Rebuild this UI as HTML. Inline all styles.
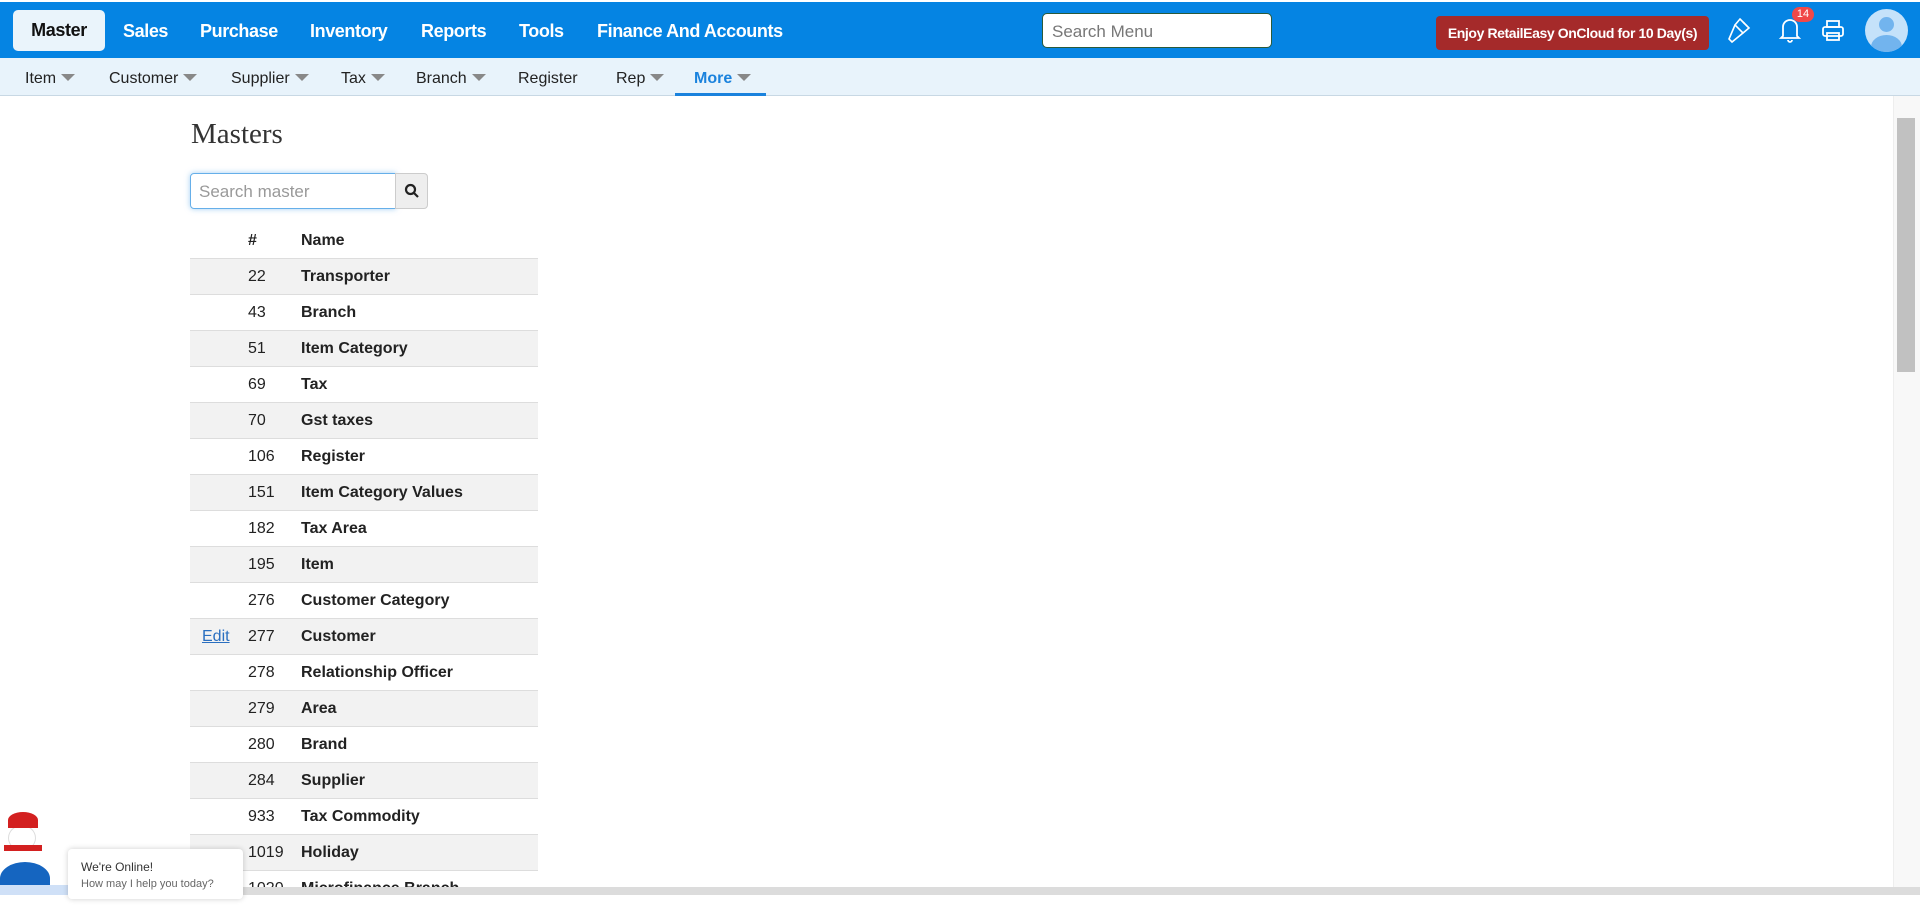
<!DOCTYPE html>
<html><head><meta charset="utf-8"><style>
*{box-sizing:border-box;margin:0;padding:0}
body{width:1920px;height:895px;overflow:hidden;background:#fff;font-family:"Liberation Sans",sans-serif;position:relative;color:#222}
.top{position:absolute;left:0;top:2px;width:1920px;height:56px;background:#0584e3}
.top .m{position:absolute;top:19px;font-size:18px;font-weight:bold;color:#fff;letter-spacing:-0.4px}
.master{position:absolute;left:13px;top:8px;width:92px;height:41px;background:#eaf4fb;border-radius:5px;color:#111;font-size:18px;font-weight:bold;text-align:center;line-height:41px;letter-spacing:-0.4px}
.sm{position:absolute;left:1042px;top:11px;width:230px;height:35px;background:#fff;border:1px solid #2a5a3a;border-radius:5px;font-size:17px;color:#777;padding:8px 9px}
.badge{position:absolute;left:1436px;top:14px;width:273px;height:34px;background:#a52a2a;border-radius:4px;color:#fff;font-weight:bold;font-size:14px;line-height:34px;text-align:center;letter-spacing:-0.4px}
.sub{position:absolute;left:0;top:58px;width:1920px;height:38px;background:#e8f3fb;border-bottom:1px solid #c8d8e4}
.sub span{position:absolute;top:12px;font-size:16px;color:#222}
.sub i{display:inline-block;width:0;height:0;border-left:7px solid transparent;border-right:7px solid transparent;border-top:7px solid #888;margin-left:5px;vertical-align:2px}
h1{position:absolute;left:191px;top:118px;font-family:"Liberation Serif",serif;font-weight:normal;font-size:29px;color:#333}
.inp{position:absolute;left:190px;top:173px;width:206px;height:36px;border:1px solid #66afe9;border-radius:4px 0 0 4px;box-shadow:0 0 6px rgba(102,175,233,.6);font-size:17px;color:#999;padding:8px 8px;font-family:"Liberation Sans",sans-serif}
.btn{position:absolute;left:395px;top:173px;width:33px;height:36px;background:#eee;border:1px solid #ccc;border-radius:0 4px 4px 0}
table{position:absolute;left:190px;top:222px;width:348px;border-collapse:collapse;font-size:16px}
td,th{height:36px;padding:2px 0 0;text-align:left;border-top:1px solid #ddd}
th{border-top:none;height:36px;font-weight:bold}
tr:nth-child(even) td{background:#f2f2f2}
td.n{font-weight:bold}
.c1{width:58px;padding-left:12px}.c2{width:53px}
a{color:#2a6fc0;text-decoration:underline}
.sb{position:absolute;left:1893px;top:96px;width:27px;height:791px;background:#f8f8f8;border-left:1px solid #eee}
.th{position:absolute;left:3px;top:22px;width:18px;height:254px;background:#c1c1c1}
.hb{position:absolute;left:0;top:887px;width:1920px;height:8px;background:#dcdcdc}
.chat{position:absolute;left:68px;top:849px;width:175px;height:50px;background:#fff;box-shadow:0 0 6px rgba(0,0,0,.2);border-radius:4px;font-size:12px;padding:11px 13px;color:#333}
</style></head><body>
<div class="top">
<div class="master">Master</div>
<span class="m" style="left:123px">Sales</span>
<span class="m" style="left:200px">Purchase</span>
<span class="m" style="left:310px">Inventory</span>
<span class="m" style="left:421px">Reports</span>
<span class="m" style="left:519px">Tools</span>
<span class="m" style="left:597px">Finance And Accounts</span>
<div class="sm">Search Menu</div>
<div class="badge">Enjoy RetailEasy OnCloud for 10 Day(s)</div>
<svg style="position:absolute;left:1726px;top:13px" width="28" height="30" viewBox="0 0 28 30" fill="none" stroke="#fff" stroke-width="1.6"><path d="M14 4l9 9-6 5-8-8z"/><path d="M9 10l-6 14 3 3 11-9"/><path d="M17 7l2 2M20 10l1 1"/></svg>
<svg style="position:absolute;left:1778px;top:12px" width="24" height="30" viewBox="0 0 24 30" fill="none" stroke="#fff" stroke-width="1.8"><path d="M5 22V13a7 7 0 0 1 14 0v9l2 2H3z"/><path d="M10 26a2 2 0 0 0 4 0"/></svg>
<div style="position:absolute;left:1792px;top:5px;width:22px;height:15px;background:#f04848;border-radius:8px;color:#fff;font-size:11px;text-align:center;line-height:15px">14</div>
<svg style="position:absolute;left:1821px;top:17px" width="24" height="24" viewBox="0 0 24 24" fill="none" stroke="#fff" stroke-width="1.8"><rect x="6" y="2" width="12" height="6"/><rect x="2" y="8" width="20" height="9" rx="2"/><rect x="6" y="14" width="12" height="7"/></svg>
<div style="position:absolute;left:1865px;top:7px;width:43px;height:43px;border-radius:50%;background:#c5e2fa;overflow:hidden"><div style="position:absolute;left:14px;top:8px;width:15px;height:15px;border-radius:50%;background:#72b4ee"></div><div style="position:absolute;left:6px;top:26px;width:31px;height:24px;border-radius:50% 50% 0 0;background:#72b4ee"></div></div>
</div>
<div class="sub">
<span style="left:25px">Item<i></i></span>
<span style="left:109px">Customer<i></i></span>
<span style="left:231px">Supplier<i></i></span>
<span style="left:341px">Tax<i></i></span>
<span style="left:416px">Branch<i></i></span>
<span style="left:518px">Register</span>
<span style="left:616px">Rep<i></i></span>
<span style="left:694px;color:#1a82dd;font-weight:bold">More<i></i></span>
<div style="position:absolute;left:675px;top:35px;width:91px;height:3px;background:#1a82dd"></div>
</div>
<h1>Masters</h1>
<div class="inp">Search master</div>
<div class="btn"><svg style="position:absolute;left:8px;top:9px" width="16" height="16" viewBox="0 0 16 16" fill="none" stroke="#222" stroke-width="2.2"><circle cx="6.5" cy="6.5" r="4.5"/><path d="M10 10l4 4"/></svg></div>
<table>
<tr><th class="c1"></th><th class="c2">#</th><th>Name</th></tr>
<tr><td class="c1"></td><td>22</td><td class="n">Transporter</td></tr>
<tr><td class="c1"></td><td>43</td><td class="n">Branch</td></tr>
<tr><td class="c1"></td><td>51</td><td class="n">Item Category</td></tr>
<tr><td class="c1"></td><td>69</td><td class="n">Tax</td></tr>
<tr><td class="c1"></td><td>70</td><td class="n">Gst taxes</td></tr>
<tr><td class="c1"></td><td>106</td><td class="n">Register</td></tr>
<tr><td class="c1"></td><td>151</td><td class="n">Item Category Values</td></tr>
<tr><td class="c1"></td><td>182</td><td class="n">Tax Area</td></tr>
<tr><td class="c1"></td><td>195</td><td class="n">Item</td></tr>
<tr><td class="c1"></td><td>276</td><td class="n">Customer Category</td></tr>
<tr><td class="c1"><a>Edit</a></td><td>277</td><td class="n">Customer</td></tr>
<tr><td class="c1"></td><td>278</td><td class="n">Relationship Officer</td></tr>
<tr><td class="c1"></td><td>279</td><td class="n">Area</td></tr>
<tr><td class="c1"></td><td>280</td><td class="n">Brand</td></tr>
<tr><td class="c1"></td><td>284</td><td class="n">Supplier</td></tr>
<tr><td class="c1"></td><td>933</td><td class="n">Tax Commodity</td></tr>
<tr><td class="c1"></td><td>1019</td><td class="n">Holiday</td></tr>
<tr><td class="c1"></td><td>1020</td><td class="n">Microfinance Branch</td></tr>
</table>
<div class="sb"><div class="th"></div></div>
<div class="hb"></div>
<div style="position:absolute;left:0;top:862px;width:50px;height:33px;border-radius:50% 50% 0 0;background:#1565c0"></div>
<div style="position:absolute;left:8px;top:825px;width:28px;height:26px;border-radius:50%;background:#fff;border:1px solid #ddd"></div>
<div style="position:absolute;left:8px;top:812px;width:30px;height:16px;border-radius:50% 50% 0 0;background:#d32020"></div>
<div style="position:absolute;left:4px;top:845px;width:38px;height:6px;background:#d32020"></div>
<div style="position:absolute;left:0;top:885px;width:78px;height:10px;background:#cfe0f7"></div>
<div class="chat"><div>We're Online!</div><div style="font-size:11px;color:#666;margin-top:4px">How may I help you today?</div></div>
</body></html>
